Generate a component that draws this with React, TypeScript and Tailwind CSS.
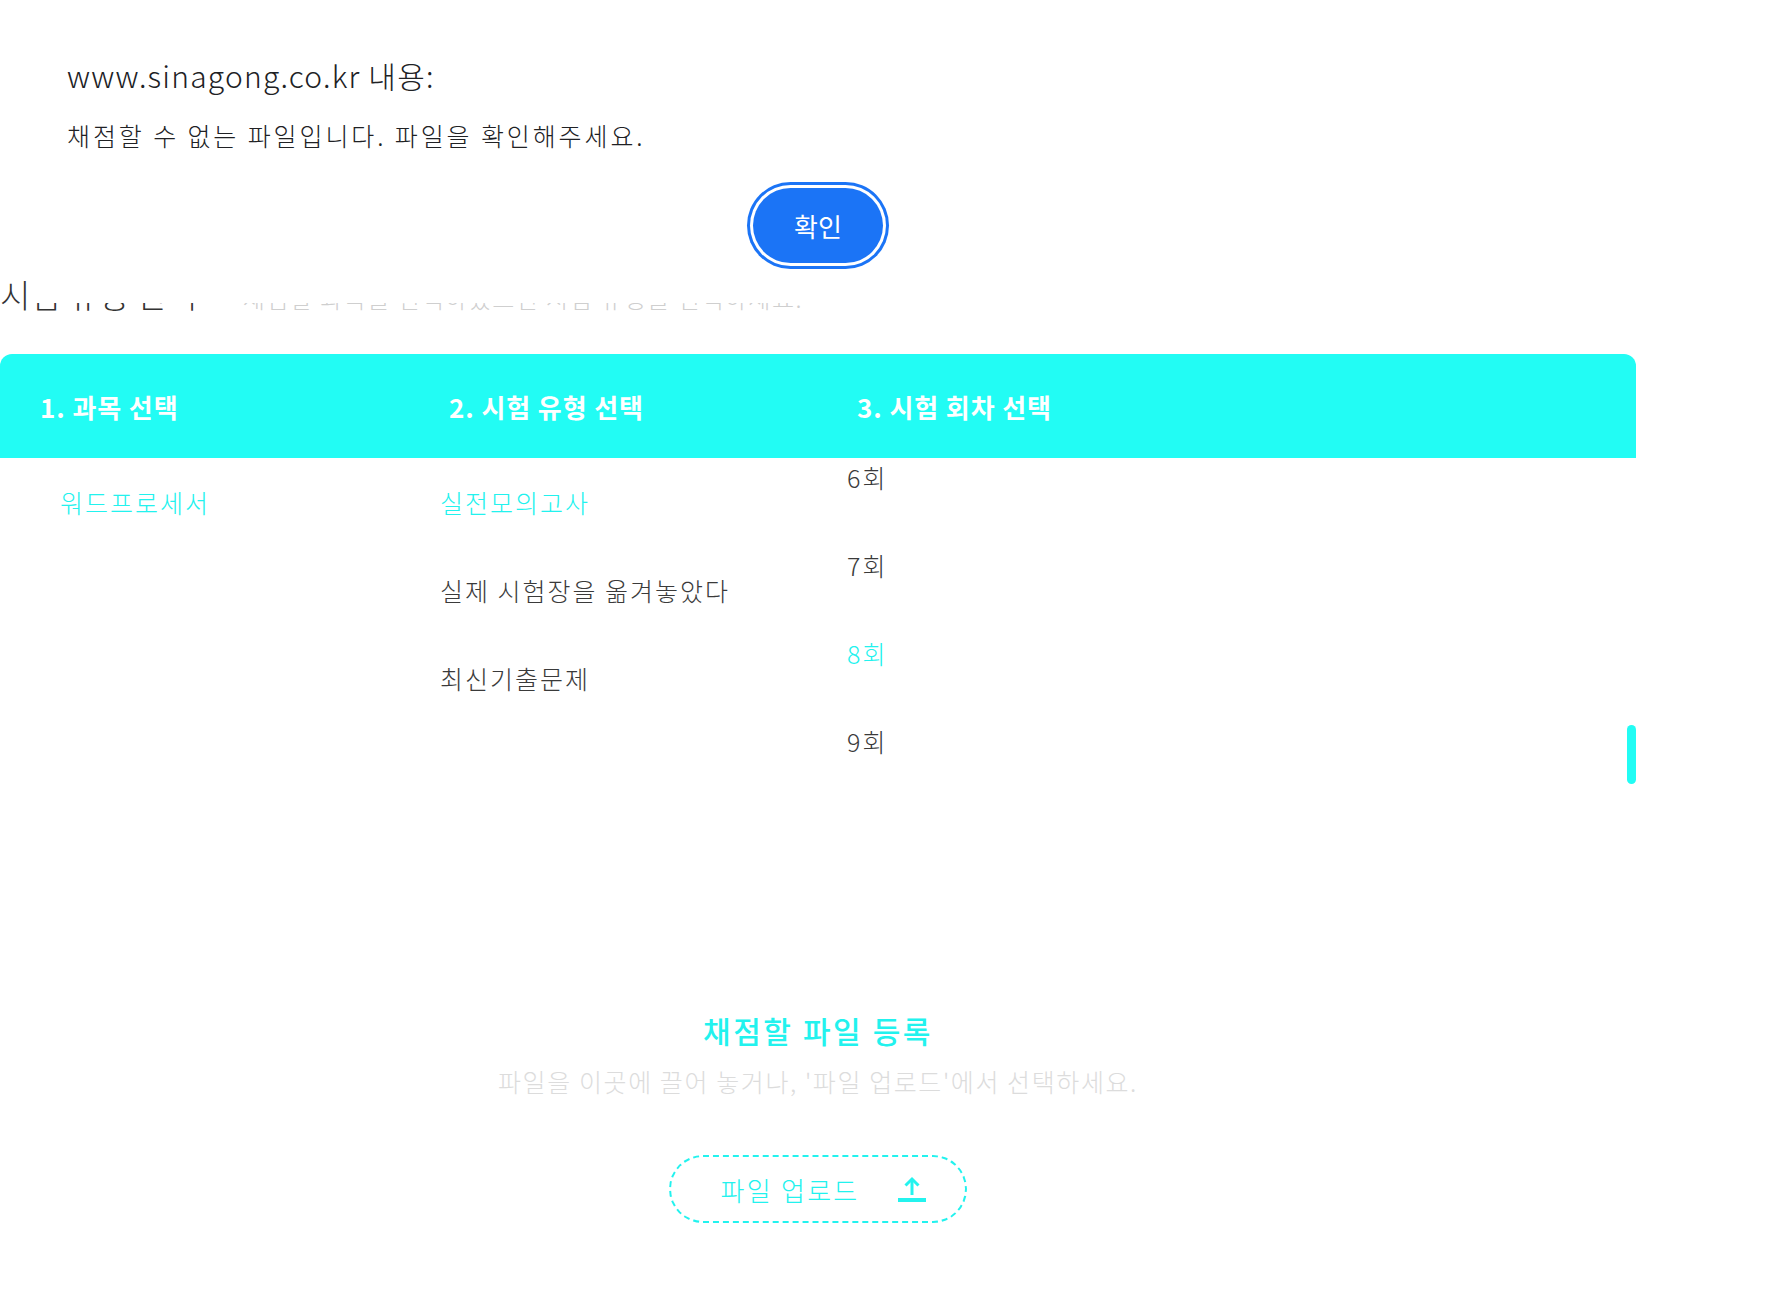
import React from "react";

function UploadIcon() {
  return (
    <svg width="28" height="27" viewBox="0 0 28 27" fill="none">
      <path d="M14 3 V19" stroke="#24f3ee" strokeWidth="3" />
      <path d="M7.5 9.5 L14 3 L20.5 9.5" stroke="#24f3ee" strokeWidth="3" fill="none" />
      <rect x="0" y="22" width="28" height="4" fill="#24f3ee" />
    </svg>
  );
}

export default function App() {
  const font = { fontFamily: '"Noto Sans CJK KR", "Noto Sans", sans-serif' };
  const rounds = ["6회", "7회", "8회", "9회"];
  return (
    <div className="relative min-h-[1300px] w-[1776px] bg-white overflow-hidden" style={font}>
      <div className="w-[1636px] pt-[274px]">
        {/* title row */}
        <div className="flex items-baseline h-[40px]">
          <h2 className="text-[33px] leading-[40px] text-[#333] font-light tracking-[0px]">시험 유형 선택</h2>
          <p className="ml-[46px] text-[24px] font-light text-[#cfcfcf] tracking-[1.5px]">채점할 과목을 선택하셨으면 시험 유형을 선택하세요.</p>
        </div>

        {/* table */}
        <div className="relative mt-[40px]">
          <div className="flex h-[104px] items-center rounded-t-[12px] bg-[#22fcf4] text-white font-bold text-[26px] tracking-[0.9px]">
            <div className="w-[409px] pl-[40px]">1. 과목 선택</div>
            <div className="w-[409px] pl-[40px]">2. 시험 유형 선택</div>
            <div className="w-[409px] pl-[39px]">3. 시험 회차 선택</div>
          </div>
          <div className="flex h-[400px] text-[25px] font-light tracking-[2px]">
            <div className="w-[409px] pl-[60px] pt-[1px]">
              <div className="h-[88px] flex items-center text-[#22f2ee]">워드프로세서</div>
            </div>
            <div className="w-[409px] pl-[31px] pt-[1px]">
              <div className="h-[88px] flex items-center text-[#22f2ee]">실전모의고사</div>
              <div className="h-[88px] flex items-center text-[#3a3a3a]">실제 시험장을 옮겨놓았다</div>
              <div className="h-[88px] flex items-center text-[#3a3a3a]">최신기출문제</div>
            </div>
            <div className="w-[409px] pl-[29px] overflow-hidden">
              <div className="-mt-[24px]">
                {rounds.map((r) => (
                  <div
                    key={r}
                    className={
                      r === "8회"
                        ? "h-[88px] flex items-center text-[#22f2ee]"
                        : "h-[88px] flex items-center text-[#3a3a3a]"
                    }
                  >
                    {r}
                  </div>
                ))}
              </div>
            </div>
          </div>
          <div className="absolute right-0 top-[371px] h-[59px] w-[9px] rounded-full bg-[#22fcf4]" />
        </div>

        {/* upload */}
        <div className="mt-[152px] flex flex-col items-center">
          <h3 className="text-[30px] leading-[40px] font-medium text-[#22f2ee] tracking-[2.6px]">채점할 파일 등록</h3>
          <p className="mt-[13px] text-[25px] leading-[36px] font-light text-[#dcdcdc] tracking-[1.6px]">
            파일을 이곳에 끌어 놓거나, '파일 업로드'에서 선택하세요.
          </p>
          <button className="mt-[56px] flex h-[68px] w-[298px] items-center justify-center gap-[38px] rounded-full border-2 border-dashed border-[#22f2ee] pl-[10px] text-[26px] font-light text-[#22f2ee] tracking-[2.3px]">
            <span>파일 업로드</span>
            <UploadIcon />
          </button>
        </div>
      </div>

      {/* alert dialog overlay */}
      <div className="absolute left-[27px] top-0 h-[303px] w-[883px] bg-white">
        <div className="pl-[40px] pt-[52px]">
          <p className="text-[30px] leading-[46px] font-light text-[#202124] tracking-[1.2px]">www.sinagong.co.kr 내용:</p>
          <p className="mt-[21px] text-[25px] leading-[32px] font-light text-[#202124] tracking-[2.9px]">채점할 수 없는 파일입니다. 파일을 확인해주세요.</p>
        </div>
        <div className="absolute left-[726px] top-[188px] flex h-[75px] w-[130px] items-center justify-center rounded-full bg-[#1b74f6] text-[26px] text-white ring-3 ring-[#1b74f6] ring-offset-3 ring-offset-white">
          확인
        </div>
      </div>
    </div>
  );
}
